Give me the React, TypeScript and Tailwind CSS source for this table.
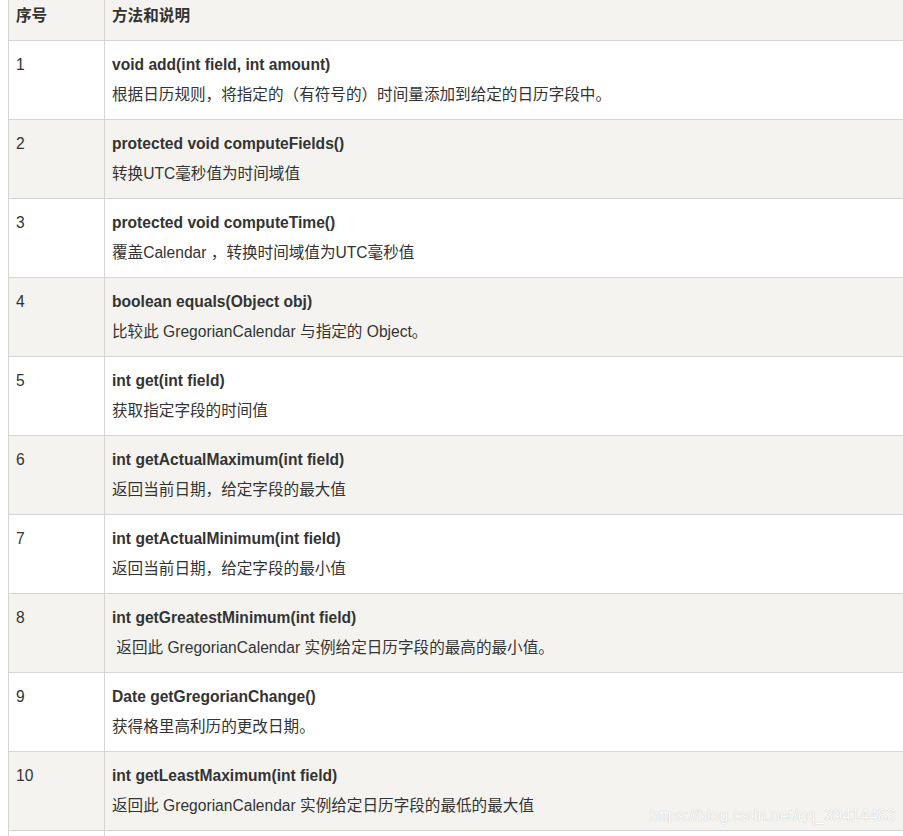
import React from "react";

const rows: { n: string; title: string; desc: string }[] = [
  { n: "1", title: "void add(int field, int amount)", desc: "根据日历规则，将指定的（有符号的）时间量添加到给定的日历字段中。" },
  { n: "2", title: "protected void computeFields()", desc: "转换UTC毫秒值为时间域值" },
  { n: "3", title: "protected void computeTime()", desc: "覆盖Calendar ，转换时间域值为UTC毫秒值" },
  { n: "4", title: "boolean equals(Object obj)", desc: "比较此 GregorianCalendar 与指定的 Object。" },
  { n: "5", title: "int get(int field)", desc: "获取指定字段的时间值" },
  { n: "6", title: "int getActualMaximum(int field)", desc: "返回当前日期，给定字段的最大值" },
  { n: "7", title: "int getActualMinimum(int field)", desc: "返回当前日期，给定字段的最小值" },
  { n: "8", title: "int getGreatestMinimum(int field)", desc: "\u00a0返回此 GregorianCalendar 实例给定日历字段的最高的最小值。" },
  { n: "9", title: "Date getGregorianChange()", desc: "获得格里高利历的更改日期。" },
  { n: "10", title: "int getLeastMaximum(int field)", desc: "返回此 GregorianCalendar 实例给定日历字段的最低的最大值" },
];

export default function App() {
  return (
    <div
      className="relative w-[903px] h-[836px] overflow-hidden bg-white text-[#333] text-[15.6px]"
      style={{ fontFamily: '"Liberation Sans", Arial, "Noto Sans CJK SC", sans-serif' }}
    >
      <div className="ml-[8px] w-[1000px] border-l border-[#d4d4d4]">
        <div className="grid grid-cols-[95px_1fr] bg-[#f4f3f0] border-b border-[#d4d4d4] font-bold leading-[24px]">
          <div className="pl-[7px] pt-[4px] pb-[12px]">序号</div>
          <div className="border-l border-[#d4d4d4] pl-[7px] pt-[4px] pb-[12px]">方法和说明</div>
        </div>
        {rows.map((r, i) => (
          <div
            key={r.n}
            className={`grid grid-cols-[95px_1fr] border-b border-[#d4d4d4] leading-[24px] ${
              i % 2 === 1 ? "bg-[#f4f3f0]" : "bg-white"
            }`}
          >
            <div className="pl-[7px] pt-[12px] pb-[12px]">{r.n}</div>
            <div className="border-l border-[#d4d4d4] pl-[7px] pt-[12px] pb-[12px]">
              <div className="font-bold">{r.title}</div>
              <div className="mt-[6px]">{r.desc}</div>
            </div>
          </div>
        ))}
        <div className="grid grid-cols-[95px_1fr] bg-white h-[78px]">
          <div />
          <div className="border-l border-[#d4d4d4]" />
        </div>
      </div>
      <div
        className="absolute left-[650px] top-[806px] text-[16px] leading-[20px] text-[#fafafa] whitespace-nowrap"
        style={{ textShadow: "0 0 1px #b8b8b8" }}
      >
        https://blog.csdn.net/qq_39414483
      </div>
    </div>
  );
}
